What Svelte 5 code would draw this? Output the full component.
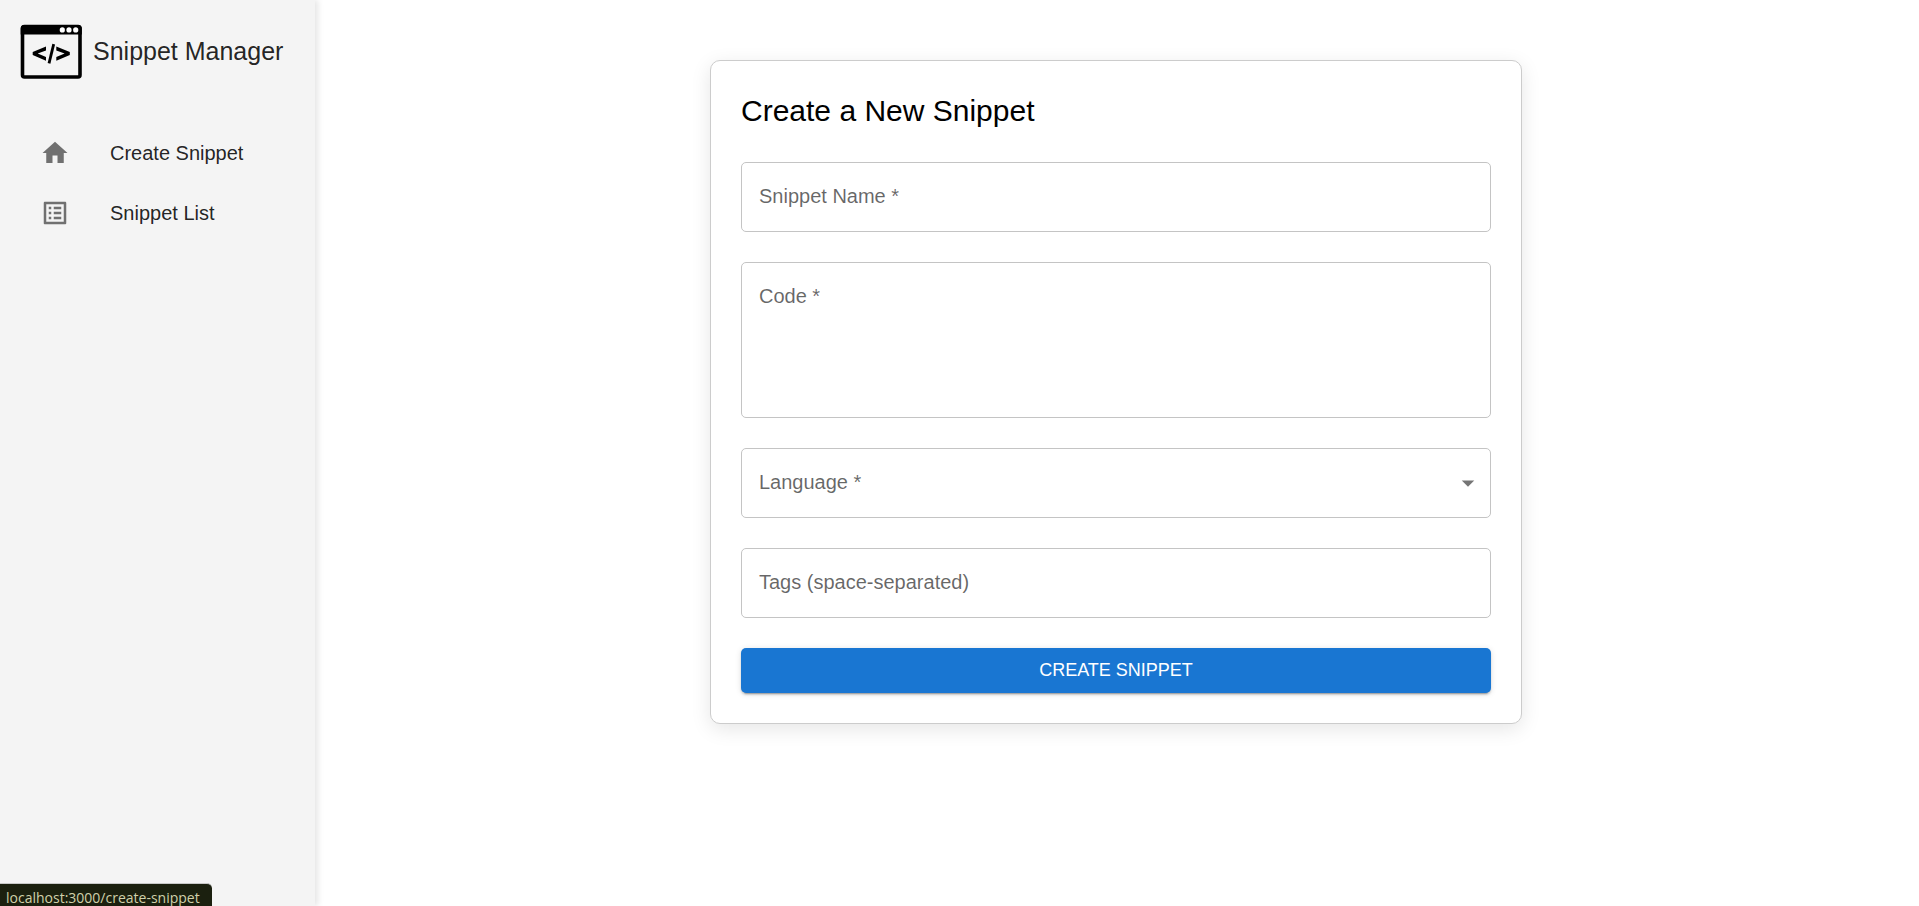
<script>
  let name = $state('');
  let code = $state('');
  let language = $state('');
  let tags = $state('');

  const languages = ['JavaScript', 'Python', 'Java', 'C++'];
</script>

<div class="app">
  <aside class="sidebar">
    <div class="brand">
      <svg class="logo" viewBox="0 0 62 62" aria-hidden="true">
        <rect x="2.5" y="6.5" width="57.500" height="50.500" rx="2" fill="none" stroke="#000" stroke-width="3.600" />
        <path d="M.7 8.500a3.500 3.500 0 0 1 3.500-3.500h54.100a3.500 3.500 0 0 1 3.500 3.500V14.500H.7z" />
        <g fill="#fff">
          <circle cx="42.300" cy="9.900" r="2.600" />
          <circle cx="49" cy="9.900" r="2.600" />
          <circle cx="55.700" cy="9.900" r="2.600" />
        </g>
        <path d="M26 26.500v3.900l-8.300 3.200 8.300 3.300v3.900L12.700 35.100v-3zM36.300 26.500v3.900l8.300 3.200-8.300 3.300v3.900l13.500-5.700v-3z" />
        <path d="M33.700 24.200 29 43.400" fill="none" stroke="#000" stroke-width="2.800" />
      </svg>
      <span class="brand-name">Snippet Manager</span>
    </div>
    <nav>
      <a class="nav-item" href="#create-snippet">
        <svg viewBox="0 0 24 24" aria-hidden="true"><path d="M10 20v-6h4v6h5v-8h3L12 3 2 12h3v8z" /></svg>
        <span>Create Snippet</span>
      </a>
      <a class="nav-item" href="#snippet-list">
        <svg viewBox="0 0 24 24" aria-hidden="true">
          <path d="M19 5v14H5V5h14m1.100-2H3.900c-.5 0-.9.4-.9.9v16.200c0 .4.4.9.9.9h16.200c.4 0 .9-.5.9-.9V3.900c0-.5-.5-.9-.9-.9zM11 7h6v2h-6V7zm0 4h6v2h-6v-2zm0 4h6v2h-6zM7 7h2v2H7zm0 4h2v2H7zm0 4h2v2H7z" />
        </svg>
        <span>Snippet List</span>
      </a>
    </nav>
  </aside>

  <main>
    <form class="card" onsubmit={(e) => e.preventDefault()}>
      <h1>Create a New Snippet</h1>

      <div class="field" class:filled={name}>
        <input id="name" type="text" required bind:value={name} />
        <label for="name">Snippet Name&nbsp;*</label>
      </div>

      <div class="field" class:filled={code}>
        <textarea id="code" required bind:value={code}></textarea>
        <label for="code">Code&nbsp;*</label>
      </div>

      <div class="field" class:filled={language}>
        <select id="language" required bind:value={language}>
          <option value=""></option>
          {#each languages as item}
            <option value={item}>{item}</option>
          {/each}
        </select>
        <label for="language">Language&nbsp;*</label>
        <svg class="arrow" viewBox="0 0 24 24" aria-hidden="true"><path d="m7 10 5 5 5-5z" /></svg>
      </div>

      <div class="field" class:filled={tags}>
        <input id="tags" type="text" bind:value={tags} />
        <label for="tags">Tags (space-separated)</label>
      </div>

      <button type="submit">CREATE SNIPPET</button>
    </form>
  </main>

  <div class="status">localhost:3000/create-snippet</div>
</div>

<style>
  :global(body) {
    background: #fff;
  }

  .app {
    display: flex;
    min-height: 100vh;
    font-family: 'Liberation Sans', Arial, sans-serif;
    font-size: 20px;
    line-height: 30px;
    color: rgba(0, 0, 0, 0.87);
  }

  .app * {
    box-sizing: border-box;
  }

  .sidebar {
    flex: 0 0 315px;
    padding: 20px;
    background: #f4f4f4;
    box-shadow: 3px 0 6px rgba(0, 0, 0, 0.1);
  }

  .brand {
    display: flex;
    align-items: center;
    gap: 11px;
    margin-bottom: 41px;
  }

  .logo {
    width: 62px;
    height: 62px;
  }

  .brand-name {
    font-size: 25px;
    white-space: nowrap;
  }

  .nav-item {
    display: flex;
    align-items: center;
    gap: 40px;
    height: 60px;
    padding: 0 20px;
    color: inherit;
    text-decoration: none;
  }

  .nav-item svg {
    width: 30px;
    height: 30px;
    fill: rgba(0, 0, 0, 0.54);
  }

  main {
    flex: 1;
    padding: 60px 32px 60px 30px;
  }

  .card {
    display: flex;
    flex-direction: column;
    gap: 30px;
    max-width: 812px;
    margin: 0 auto;
    padding: 30px;
    border: 1px solid #ccc;
    border-radius: 10px;
    background: #fff;
    box-shadow: 0 5px 20px rgba(0, 0, 0, 0.1);
  }

  h1 {
    margin: 0;
    padding-bottom: 2px;
    font-size: 30px;
    font-weight: 400;
    line-height: 39px;
    color: #000;
  }

  .field {
    display: grid;
  }

  .field > * {
    grid-area: 1 / 1;
  }

  input,
  textarea,
  select {
    width: 100%;
    height: 70px;
    margin: 0;
    padding: 20px 17px;
    border: 1px solid #c4c4c4;
    border-radius: 5px;
    background: #fff;
    font: inherit;
    color: inherit;
    appearance: none;
    outline: none;
  }

  textarea {
    display: block;
    height: 156px;
    resize: none;
  }

  input:focus,
  textarea:focus,
  select:focus {
    border-color: #1976d2;
  }

  label {
    align-self: start;
    justify-self: start;
    margin: 19px 18px;
    color: rgba(0, 0, 0, 0.6);
    pointer-events: none;
  }

  .filled label {
    visibility: hidden;
  }

  .arrow {
    align-self: center;
    justify-self: end;
    width: 30px;
    height: 30px;
    margin-right: 8px;
    fill: rgba(0, 0, 0, 0.54);
    pointer-events: none;
  }

  button {
    height: 45px;
    padding: 0 20px 2px;
    border: 0;
    border-radius: 5px;
    background: #1976d2;
    box-shadow:
      0 4px 1px -3px rgba(0, 0, 0, 0.2),
      0 2px 2px rgba(0, 0, 0, 0.14),
      0 1px 6px rgba(0, 0, 0, 0.12);
    font: inherit;
    font-size: 18px;
    color: #fff;
    cursor: pointer;
  }

  .status {
    position: fixed;
    bottom: 0;
    left: 0;
    height: 23px;
    padding: 0 12px 0 6px;
    border-top: 1px solid #c8c8c8;
    border-radius: 0 5px 0 0;
    background: #1b200f;
    font-family: 'Open Sans', 'Noto Sans', sans-serif;
    font-size: 14px;
    line-height: 28px;
    color: #d0d0aa;
    overflow: hidden;
  }
</style>
